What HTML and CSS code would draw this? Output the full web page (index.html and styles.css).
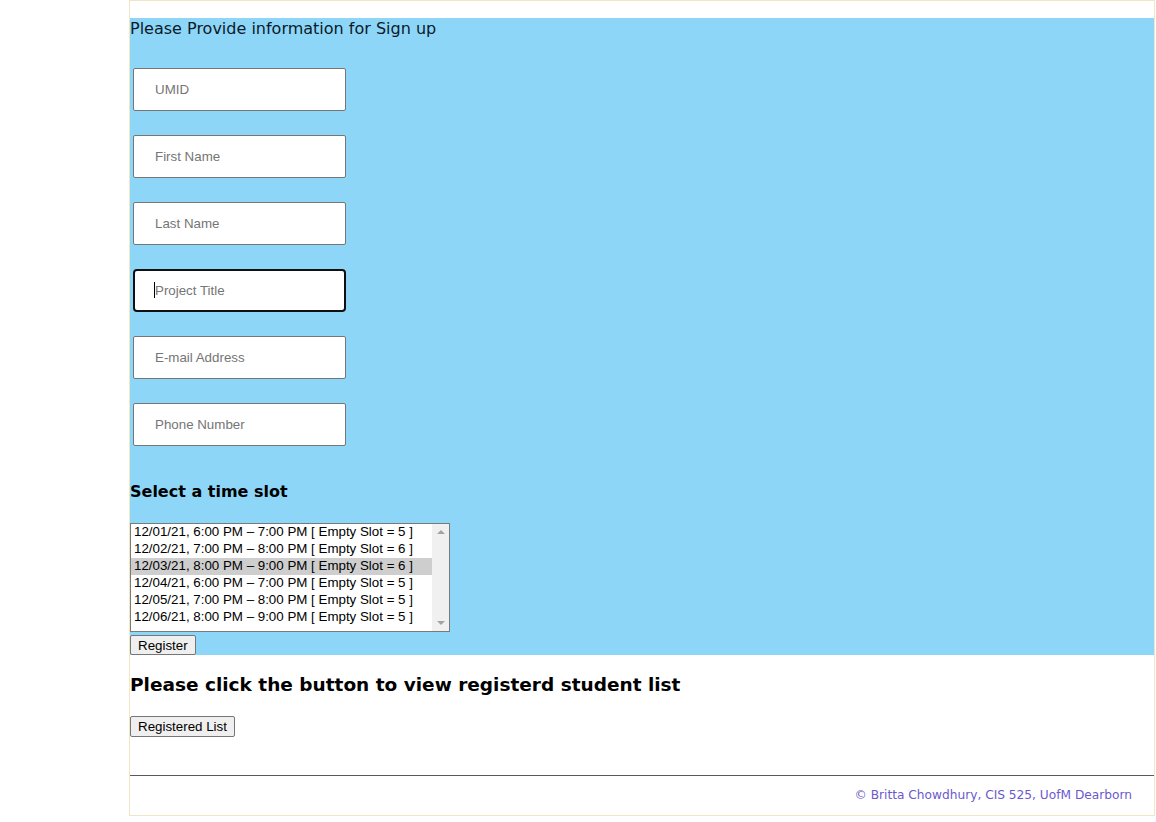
FILE: index.html
```html
<!DOCTYPE html>
<html lang="en">
<head>
<meta charset="utf-8">
<title>Sign up</title>
<link rel="stylesheet" href="styles.css">
</head>
<body>
<div class="page">
  <section class="signup">
    <p class="intro">Please Provide information for Sign up</p>
    <form class="fields">
      <input class="field" type="text" placeholder="UMID">
      <input class="field" type="text" placeholder="First Name">
      <input class="field" type="text" placeholder="Last Name">
      <span class="focus-wrap"><input class="field focused" type="text" placeholder="Project Title"></span>
      <input class="field" type="text" placeholder="E-mail Address">
      <input class="field" type="text" placeholder="Phone Number">
    </form>
    <h3 class="slot-title">Select a time slot</h3>
    <div class="listbox" role="listbox">
      <div class="options">
        <div class="option">12/01/21, 6:00 PM – 7:00 PM [ Empty Slot = 5 ]</div>
        <div class="option">12/02/21, 7:00 PM – 8:00 PM [ Empty Slot = 6 ]</div>
        <div class="option selected">12/03/21, 8:00 PM – 9:00 PM [ Empty Slot = 6 ]</div>
        <div class="option">12/04/21, 6:00 PM – 7:00 PM [ Empty Slot = 5 ]</div>
        <div class="option">12/05/21, 7:00 PM – 8:00 PM [ Empty Slot = 5 ]</div>
        <div class="option">12/06/21, 8:00 PM – 9:00 PM [ Empty Slot = 5 ]</div>
      </div>
      <div class="scrollbar">
        <span class="arrow up"></span>
        <span class="arrow down"></span>
      </div>
    </div>
    <button class="btn register" type="button">Register</button>
  </section>
  <h2 class="list-title">Please click the button to view registerd student list</h2>
  <button class="btn list-btn" type="button">Registered List</button>
  <hr class="rule">
  <footer class="footer">© Britta Chowdhury, CIS 525, UofM Dearborn</footer>
</div>
</body>
</html>
```

FILE: styles.css
```css
html, body {
  margin: 0;
  padding: 0;
  background: #ffffff;
}

.page {
  margin-left: 129px;
  width: 1024px;
  border: 1px solid #efe7c6;
  padding-top: 17px;
  font-family: "DejaVu Sans", Verdana, sans-serif;
  color: #000;
}

.signup {
  background: #8ed6f8;
  height: 637px;
  display: flex;
  flex-direction: column;
  align-items: flex-start;
}

.intro {
  margin: 0;
  font-size: 16px;
  line-height: 22px;
  color: #0a1a2a;
}

.fields {
  margin: 28px 0 0 3px;
  display: flex;
  flex-direction: column;
  align-items: flex-start;
  gap: 24px;
}

.field {
  box-sizing: border-box;
  width: 213px;
  height: 43px;
  border: 1px solid #767676;
  border-radius: 2px;
  padding: 0 0 1px 21px;
  margin: 0;
  background: #fff;
  font-family: "Liberation Sans", Arial, sans-serif;
  font-size: 13.33px;
  outline: none;
}

.field::placeholder {
  color: #757575;
}

.focus-wrap {
  position: relative;
  display: block;
}

.field.focused {
  border: 2px solid #101010;
  border-radius: 4px;
  padding-left: 20px;
}

.focus-wrap::before {
  content: "";
  position: absolute;
  left: 21px;
  top: 13px;
  width: 1px;
  height: 16px;
  background: #000;
}

.slot-title {
  margin: 35px 0 0 0;
  font-size: 16px;
  line-height: 22px;
  font-weight: bold;
}

.listbox {
  margin-top: 20px;
  box-sizing: border-box;
  width: 320px;
  height: 109px;
  border: 1px solid #7a7a7a;
  background: #fff;
  display: flex;
  font-family: "Liberation Sans", Arial, sans-serif;
  font-size: 13.33px;
}

.options {
  flex: 1;
}

.option {
  height: 17px;
  line-height: 16px;
  padding-left: 3px;
  white-space: nowrap;
  color: #000;
}

.option.selected {
  background: #cecece;
}

.scrollbar {
  width: 17px;
  background: #f0f0f0;
  display: flex;
  flex-direction: column;
  justify-content: space-between;
  align-items: center;
  padding: 6px 0;
}

.arrow {
  width: 0;
  height: 0;
  border-left: 4px solid transparent;
  border-right: 4px solid transparent;
}

.arrow.up {
  border-bottom: 4px solid #a3a3a3;
}

.arrow.down {
  border-top: 4px solid #a3a3a3;
}

.btn {
  font-family: "Liberation Sans", Arial, sans-serif;
  font-size: 13.33px;
  background: #efefef;
  border: 1px solid #767676;
  border-radius: 2px;
  color: #000;
  padding: 0 7px;
  margin: 0;
}

.register {
  margin-top: 3px;
  height: 20px;
}

.list-title {
  margin: 18px 0 0 0;
  font-size: 18.5px;
  line-height: 24px;
  font-weight: bold;
}

.list-btn {
  margin-top: 19px;
  height: 21px;
}

.rule {
  margin: 38px 0 0 0;
  border: 0;
  border-top: 1px solid #5a5a5a;
  height: 0;
}

.footer {
  text-align: right;
  padding: 11px 22px 12px 0;
  font-size: 12.2px;
  line-height: 16px;
  color: #6a5acd;
}
```
